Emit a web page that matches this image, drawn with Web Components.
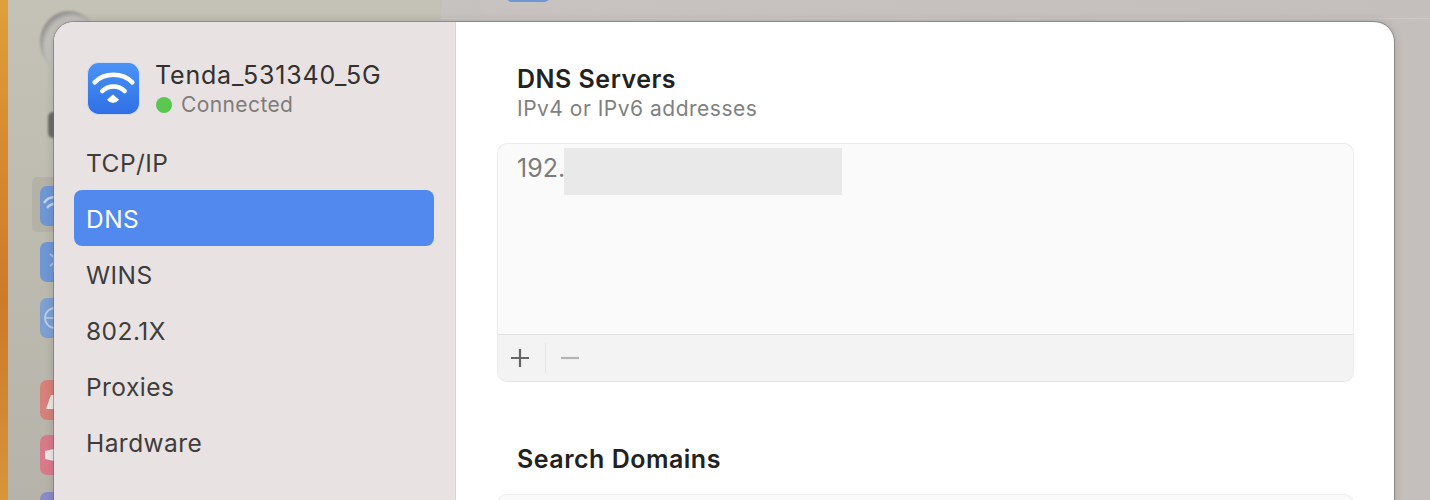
<!DOCTYPE html>
<html>
<head>
<meta charset="utf-8">
<style>
  html, body { margin: 0; height: 100%; overflow: hidden; }
  body { font-family: "Inter", "Liberation Sans", sans-serif; }
</style>
</head>
<body>
<mac-desktop>
  <dim-icon style="left:40px;top:186px" color="#6f97d4">
    <svg viewBox="0 0 30 40"><path d="M4 17 C8 11 14 10 20 13M7 22 C10 18 14 17 18 19" fill="none" stroke="#c3d3ec" stroke-width="2.4"/></svg>
  </dim-icon>
  <dim-icon style="left:40px;top:242px" color="#6f97d4">
    <svg viewBox="0 0 30 40"><path d="M10 12 L17 18 L10 24 M14 12 V30" fill="none" stroke="#a9c0e4" stroke-width="2"/></svg>
  </dim-icon>
  <dim-icon style="left:40px;top:298px" color="#7d9fd2">
    <svg viewBox="0 0 30 40"><circle cx="15" cy="20" r="10" fill="none" stroke="#bccde6" stroke-width="1.8"/><path d="M5 20 H25 M15 10 V30" stroke="#bccde6" stroke-width="1.5"/></svg>
  </dim-icon>
  <dim-icon style="left:40px;top:380px" color="#d8807a">
    <svg viewBox="0 0 30 40"><path d="M6 29 L11 15 L14 15 V29 Z" fill="#eeeae4"/></svg>
  </dim-icon>
  <dim-icon style="left:40px;top:435px" color="#d97a8a">
    <svg viewBox="0 0 30 40"><path d="M5 16 L14 14 V26 L5 24 Z" fill="#eeeae4"/></svg>
  </dim-icon>
  <dim-icon style="left:40px;top:492px" color="#8a8ac8"></dim-icon>
  <network-sheet>
    <network-sidebar slot="side" name="Tenda_531340_5G" status="Connected">
      <side-item>TCP/IP</side-item>
      <side-item active>DNS</side-item>
      <side-item>WINS</side-item>
      <side-item>802.1X</side-item>
      <side-item>Proxies</side-item>
      <side-item>Hardware</side-item>
    </network-sidebar>
    <list-section heading="DNS Servers" sub="IPv4 or IPv6 addresses" value="192."></list-section>
    <list-section heading="Search Domains" class="second"></list-section>
  </network-sheet>
</mac-desktop>

<script>
class MacDesktop extends HTMLElement {
    constructor() {
        super();
        this.attachShadow({ mode: 'open' });
        this.shadowRoot.innerHTML = `
            <style>
                :host { display: block; position: relative; width: 1430px; height: 500px; overflow: hidden;
                    background: linear-gradient(90deg, #c0bdb3 0, #bdbab0 440px, #c6c2bf 441px, #c5c1be 480px, #c8c3c0 481px, #c4bfbc 100%); }
                .strip { position: absolute; left: 8px; top: 0; bottom: 0; width: 432px;
                    background: linear-gradient(180deg, #c4c2b7 0, #bdbab0 250px, #b6b3aa 500px); }
                .wall { position: absolute; left: 0; top: 0; bottom: 0; width: 8px;
                    background: linear-gradient(180deg, #dfa03a 0, #d98e30 120px, #cd7b28 300px, #d08430 380px, #d8953a 500px); }
                .pic { position: absolute; left: 40px; top: 11px; width: 58px; height: 62px; border-radius: 50%; background: #c4c2bd;
                    box-shadow: inset 4px 5px 4px -2px #8f8d8a; filter: blur(1px); }
                .blob { position: absolute; left: 48px; top: 112px; width: 10px; height: 26px; border-radius: 5px; background: #6e6c68; filter: blur(1px); }
                .tile { position: absolute; left: 32px; top: 177px; width: 30px; height: 55px; border-radius: 5px; background: #b4b1a6; }
                .btn { position: absolute; left: 506px; top: -16px; width: 44px; height: 18px; border-radius: 6px; background: #6f97d4; }
                .seam { position: absolute; left: 440px; right: 0; top: 18px; height: 1px; background: rgba(255,255,255,.14); }
            </style>
            <div class="strip"></div>
            <div class="wall"></div>
            <div class="pic"></div>
            <div class="blob"></div>
            <div class="tile"></div>
            <div class="btn"></div>
            <div class="seam"></div>
            <slot></slot>
        `;
    }
}

class DimIcon extends HTMLElement {
    constructor() {
        super();
        this.attachShadow({ mode: 'open' });
    }

    connectedCallback() {
        const color = this.getAttribute('color');
        this.shadowRoot.innerHTML = `
            <style>
                :host { display: block; position: absolute; width: 30px; height: 40px; border-radius: 7px; background: ${color}; filter: blur(.6px); }
                ::slotted(svg) { display: block; width: 30px; height: 40px; }
            </style>
            <slot></slot>
        `;
    }
}

class NetworkSheet extends HTMLElement {
    constructor() {
        super();
        this.attachShadow({ mode: 'open' });
        this.shadowRoot.innerHTML = `
            <style>
                :host { display: flex; position: absolute; left: 54px; top: 22px; width: 1340px; height: 500px;
                    border-radius: 20px 20px 0 0; overflow: hidden; background: #fff;
                    box-shadow: 0 0 0 1px rgba(110,106,104,.55), 0 0 8px 1px rgba(0,0,0,.14); }
                .main { flex: 1; padding: 42px 40px 0 41px; }
            </style>
            <slot name="side"></slot>
            <div class="main"><slot></slot></div>
        `;
    }
}

class NetworkSidebar extends HTMLElement {
    constructor() {
        super();
        this.attachShadow({ mode: 'open' });
    }

    connectedCallback() {
        this.shadowRoot.innerHTML = `
            <style>
                :host { display: block; box-sizing: border-box; width: 402px; flex: none; padding: 40px 21px 0 20px;
                    background: #e8e3e2; border-right: 1px solid #d8d4d2; }
                .head { display: flex; align-items: flex-start; gap: 15px; padding-left: 13px; height: 56px; margin-bottom: 16px; }
                svg { display: block; width: 53px; height: 53px; flex: none; }
                .name { font-size: 25px; line-height: 27px; color: #333030; letter-spacing: .82px; white-space: nowrap; }
                .state { display: flex; align-items: center; gap: 9px; margin-top: 1px; font-size: 21px; line-height: 30px; letter-spacing: .4px; color: #7f7b7b; }
                .dot { width: 16px; height: 16px; border-radius: 50%; background: #5ac84f; margin-left: 1px; }
            </style>
            <div class="head">
                <svg viewBox="0 0 52 52">
                    <defs><linearGradient id="g" x1="0" y1="0" x2="0" y2="1">
                        <stop offset="0" stop-color="#4a93f6"/><stop offset="1" stop-color="#2f6fe4"/>
                    </linearGradient></defs>
                    <rect x=".5" y=".5" width="51" height="51" rx="11" fill="url(#g)" stroke="#d3dcf0"/>
                    <g fill="none" stroke="#fff" stroke-width="4.4" stroke-linecap="round">
                        <path d="M7.5 20 C17 10 35 10 44.5 20"/>
                        <path d="M15 28.5 C21 22.5 31 22.5 37 28.5"/>
                    </g>
                    <path d="M25.5 32 L31.5 37 Q25.5 43.5 19.5 37 Z" fill="#fff"/>
                </svg>
                <div>
                    <div class="name">${this.getAttribute('name')}</div>
                    <div class="state"><span class="dot"></span>${this.getAttribute('status')}</div>
                </div>
            </div>
            <slot></slot>
        `;
    }
}

class SideItem extends HTMLElement {
    constructor() {
        super();
        this.attachShadow({ mode: 'open' });
        this.shadowRoot.innerHTML = `
            <style>
                :host { display: flex; align-items: center; box-sizing: border-box; height: 56px; padding: 1px 0 0 12px; border-radius: 8px;
                    font-size: 24.5px; letter-spacing: .45px; color: #3f3c3c; }
                :host([active]) { background: #5289ee; color: #fff; }
            </style>
            <slot></slot>
        `;
    }
}

class ListSection extends HTMLElement {
    constructor() {
        super();
        this.attachShadow({ mode: 'open' });
    }

    connectedCallback() {
        const sub = this.getAttribute('sub');
        const value = this.getAttribute('value');
        this.shadowRoot.innerHTML = `
            <style>
                :host { display: block; }
                :host(.second) { margin-top: 62px; }
                h2 { margin: 0 0 0 20px; font-size: 25px; line-height: 30px; font-weight: 600; letter-spacing: .5px; color: #222; }
                p { margin: 2px 0 0 20px; font-size: 21px; line-height: 26px; letter-spacing: .5px; color: #808080; }
                .box { box-sizing: border-box; height: 239px; margin-top: 21px; display: flex; flex-direction: column;
                    border: 1px solid #ececec; border-bottom-color: #e4e4e4; border-radius: 10px; background: #fafafa; overflow: hidden; }
                :host(.second) .box { margin-top: 20px; }
                .rows { flex: 1; display: flex; align-items: flex-start; padding: 4px 0 0 19px; font-size: 25px; line-height: 40px; color: #7c7c7c; }
                .mask { width: 278px; height: 47px; margin-left: -1px; background: #e9e9e9; }
                .bar { height: 46px; display: flex; align-items: center; background: #f3f3f3; border-top: 1px solid #e2e2e2; }
                .bar span { display: flex; align-items: center; justify-content: center; box-sizing: border-box; width: 47px; height: 100%; }
                .bar span:first-child { padding-right: 3px; }
                .bar i { width: 1px; height: 30px; background: #e6e6e6; }
                svg { width: 20px; height: 20px; display: block; }
            </style>
            <h2>${this.getAttribute('heading')}</h2>
            ${sub ? `<p>${sub}</p>` : ''}
            <div class="box">
                <div class="rows">${value ? `${value}<div class="mask"></div>` : ''}</div>
                <div class="bar">
                    <span><svg viewBox="0 0 20 20"><path d="M10 1V19M1 10H19" stroke="#666" stroke-width="2.2"/></svg></span>
                    <i></i>
                    <span><svg viewBox="0 0 20 20"><path d="M1 10H19" stroke="#b4b4b4" stroke-width="2.2"/></svg></span>
                </div>
            </div>
        `;
    }
}

customElements.define('mac-desktop', MacDesktop);
customElements.define('dim-icon', DimIcon);
customElements.define('network-sheet', NetworkSheet);
customElements.define('network-sidebar', NetworkSidebar);
customElements.define('side-item', SideItem);
customElements.define('list-section', ListSection);
</script>
</body>
</html>
